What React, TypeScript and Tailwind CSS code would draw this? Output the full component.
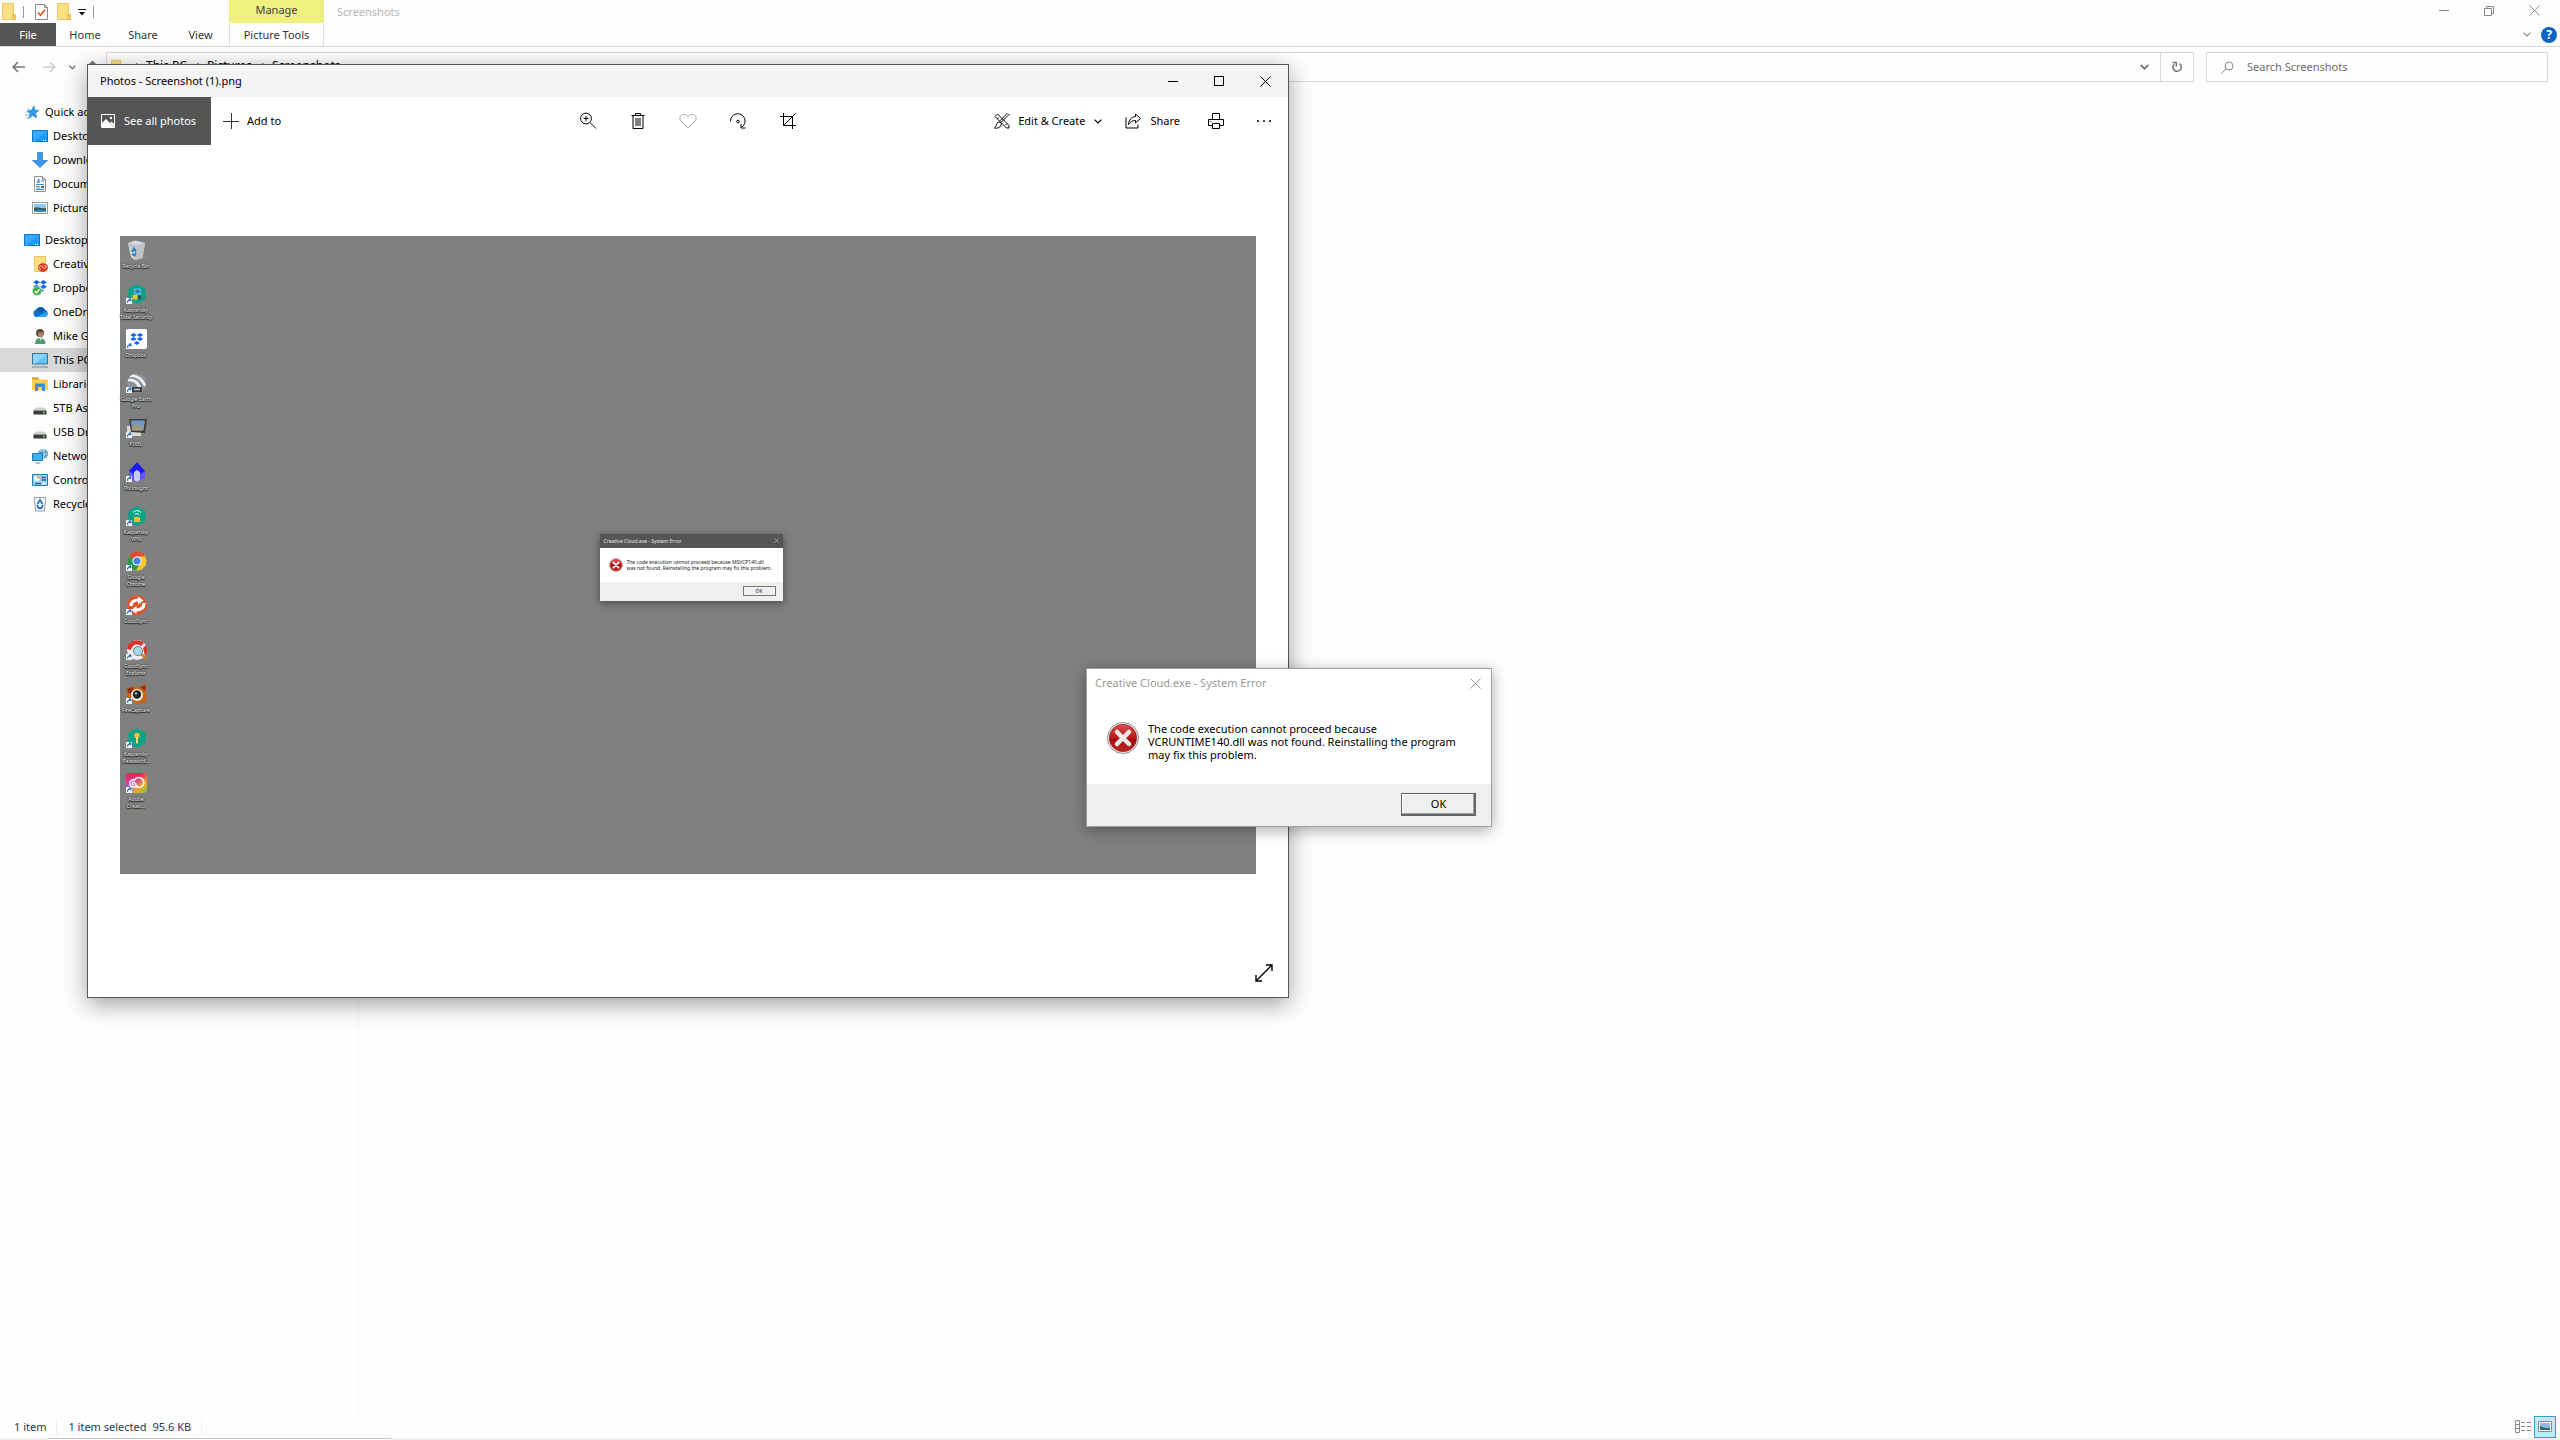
import React from "react";
import type { ReactNode } from "react";

type IconProps = { className?: string };

function FolderIcon({ className = "h-[17px] w-[14px]" }: IconProps) {
  return (
    <svg viewBox="0 0 14 17" className={className} aria-hidden="true">
      <path d="M.5.5h11v11l1.5 1v4H.5z" fill="#fbdf85" stroke="#edc65c" />
      <path d="M10.5 11.5h3v5h-3z" fill="#f3c957" stroke="#e2b442" strokeWidth=".7" />
    </svg>
  );
}

function CheckDocIcon() {
  return (
    <svg viewBox="0 0 13 16" className="h-4 w-[13px]" aria-hidden="true">
      <path d="M.5.5h9l3 3v12H.5z" fill="#fff" stroke="#8c8c8c" />
      <path d="M9.5.5v3h3" fill="none" stroke="#8c8c8c" />
      <path d="M3 8.5l2.5 2.8L10 5.8" fill="none" stroke="#e2571e" strokeWidth="1.7" />
    </svg>
  );
}

function Chevron({ className = "h-[5px] w-[8px]", width = 1.5 }: IconProps & { width?: number }) {
  return (
    <svg viewBox="0 0 8 5" className={className} fill="none" stroke="currentColor" strokeWidth={width} aria-hidden="true">
      <path d="M.6.6L4 4 7.4.6" />
    </svg>
  );
}

function Arrow({ className }: IconProps) {
  return (
    <svg viewBox="0 0 13 12" className={className} fill="none" stroke="currentColor" strokeWidth="1.7" aria-hidden="true">
      <path d="M6 1L1.2 6 6 11M1.2 6H13" />
    </svg>
  );
}

function CloseGlyph({ className = "size-[11px]" }: IconProps) {
  return (
    <svg viewBox="0 0 11 11" className={className} fill="none" stroke="currentColor" aria-hidden="true">
      <path d="M.5.5l10 10M10.5.5l-10 10" />
    </svg>
  );
}

const side = {
  star: (
    <svg viewBox="0 0 16 16" className="size-4">
      <path d="M3 5h3M1.500 8h4M1 11h4M2 14h3" stroke="#7fc0ee" />
      <path d="M10 2l1 4.200 4 .2-3.400 2.500 1 4.900-4-2.400-3.700 3 1.100-4.800L3.300 6.800l3.800-.3z" fill="#2d9de8" stroke="#1c7fc8" strokeWidth=".6" />
    </svg>
  ),
  desktop: (
    <svg viewBox="0 0 16 16" className="size-4">
      <path d="M.5 2.5h15v11H.5z" fill="#1a9bfa" stroke="#0d74c4" />
      <path d="M1 3h14L5 11H1z" fill="#38abff" />
      <path d="M2 12.5h1M11 12.5h1M13 12.5h1" stroke="#fff" />
    </svg>
  ),
  download: (
    <svg viewBox="0 0 16 16" className="size-4">
      <path d="M5.500.5h5v8h5L8 15.600.5 8.500h5z" fill="#3c97e4" stroke="#2b7cc7" strokeWidth=".7" />
    </svg>
  ),
  document: (
    <svg viewBox="0 0 16 16" className="size-4">
      <path d="M2.500.5h8l3 3v12h-11z" fill="#fff" stroke="#8f8f8f" />
      <path d="M10.500.5v3h3" fill="none" stroke="#8f8f8f" />
      <path d="M7 3l-2 4M7 3v4M9 5h3M4 8.500h8M4 13.500h8" stroke="#2f8fd3" strokeWidth="1.1" />
      <path d="M4 10.500h4M4 12h4" stroke="#63788a" strokeWidth=".8" />
      <path d="M9 10h3v2H9z" fill="#3b5f78" />
    </svg>
  ),
  pictures: (
    <svg viewBox="0 0 16 16" className="size-4">
      <path d="M.5 2.500h15v11H.5z" fill="#fff" stroke="#979797" />
      <path d="M2 4h12v8H2z" fill="#8fc6ee" />
      <path d="M2 8c3-2 6 1 12 0v4H2z" fill="#2f5f63" />
      <path d="M2 10.500c4-1 8-1 12 .2V12H2z" fill="#3f87b5" />
    </svg>
  ),
  creative: (
    <svg viewBox="0 0 16 16" className="size-4">
      <path d="M2.500.5h11v15h-11z" fill="#fbdf85" stroke="#edc65c" />
      <ellipse cx="11" cy="11.500" rx="5" ry="4.200" fill="#dc2f17" />
      <path d="M9 13.300a1.700 1.700 0 1 1 1.500-2.600l1 1.500a1.600 1.600 0 1 0 .2-2.600" fill="none" stroke="#fff" strokeWidth=".8" />
    </svg>
  ),
  dropbox: (
    <svg viewBox="0 0 16 16" className="size-4">
      <path d="M4.500 0L8 2.200 4.500 4.500 1 2.200zM11.500 0L15 2.200l-3.500 2.300L8 2.200zM4.500 4.500L8 6.700 4.500 9 1 6.700zM11.500 4.500L15 6.700 11.500 9 8 6.700zM8 8l4 2.500L8 13z" fill="#1668e8" />
      <circle cx="5" cy="11" r="4.600" fill="#3fae49" stroke="#e4f3e4" strokeWidth=".6" />
      <path d="M2.800 11l1.700 1.900 3-3.700" fill="none" stroke="#fff" strokeWidth="1.400" />
    </svg>
  ),
  onedrive: (
    <svg viewBox="0 0 16 16" className="size-4">
      <path d="M4 13a4 4 0 0 1 0-7.500A5 5 0 0 1 13 6a3.600 3.600 0 0 1 0 7z" fill="#1173cf" />
      <path d="M5 13l9-5a3 3 0 0 1-1 5z" fill="#29a4ee" />
      <path d="M4.500 5.300A5 5 0 0 1 13 6l-4 3z" fill="#0b5aaf" />
    </svg>
  ),
  user: (
    <svg viewBox="0 0 16 16" className="size-4">
      <path d="M3 16c0-4 2-6 5-6s5.500 2 5.500 6z" fill="#4f9a78" />
      <path d="M7 9h3l-1 4z" fill="#f1f1ec" />
      <circle cx="8" cy="5" r="4" fill="#5d4a3e" />
      <path d="M6 4.500c2 .5 3-.5 5.500 0 0 3-.8 5-2.700 5S6 7 6 4.500z" fill="#b28562" />
    </svg>
  ),
  pc: (
    <svg viewBox="0 0 16 16" className="size-4">
      <path d="M.5 1.500h15v10.500H.5z" fill="#62c4fb" stroke="#3e6e8f" />
      <path d="M1 2h14L3 11.500H1z" fill="#8ad6ff" />
      <path d="M0 15h16" stroke="#6b8799" />
    </svg>
  ),
  libraries: (
    <svg viewBox="0 0 16 16" className="size-4">
      <path d="M0 1.500h6l1.500 2H16V14H0z" fill="#fdce52" />
      <path d="M0 1.500h6l1 2H0z" fill="#e09a22" />
      <path d="M3 7.500h10V15h-3v-4H6v4H3z" fill="#3f8fd0" />
    </svg>
  ),
  drive: (
    <svg viewBox="0 0 16 16" className="size-4">
      <path d="M3 7.500h10l1.500 3h-13z" fill="#d2d2d2" />
      <path d="M1.500 10.500h13v4h-13z" fill="#3a3a3a" />
      <path d="M11 12.500h2" stroke="#5be05b" strokeWidth="1.300" />
    </svg>
  ),
  network: (
    <svg viewBox="0 0 16 16" className="size-4">
      <circle cx="11" cy="6" r="5" fill="#5b9fc6" />
      <path d="M8 3c2 0 3-1 5-1M9 8c2-2 4-2 6-2M11 1c1.500 3 1.500 6 0 10" stroke="#bfe1ee" fill="none" />
      <path d="M.5 5.500h10v7H.5z" fill="#3fb2f4" stroke="#2878ae" />
      <path d="M3.500 15h5" stroke="#5688a8" />
    </svg>
  ),
  control: (
    <svg viewBox="0 0 16 16" className="size-4">
      <path d="M.5 2.500h15v11H.5z" fill="#9dd5f2" stroke="#1b7db4" />
      <circle cx="5" cy="6.500" r="2.700" fill="#fff" />
      <path d="M5 6.500V3.800a2.700 2.700 0 0 1 2.700 2.700z" fill="#e2a12c" />
      <path d="M9.500 5.500h4.500M9.500 8h4.500M3 11.500h6" stroke="#1668a0" strokeWidth="1.300" />
      <path d="M10.500 10.500h3v2h-3z" fill="#fff" />
    </svg>
  ),
  recycle: (
    <svg viewBox="0 0 16 16" className="size-4">
      <path d="M2 1.500h12L12.500 15h-9z" fill="#eef1f3" stroke="#9ba3a8" />
      <path d="M5.500 8L8 4l2.500 4M11 9l-1.500 3H6.500L5 9" fill="none" stroke="#2b7ccc" strokeWidth="1.800" />
    </svg>
  ),
};

const quickItems = [
  { label: "Desktop", icon: side.desktop },
  { label: "Downloads", icon: side.download },
  { label: "Documents", icon: side.document },
  { label: "Pictures", icon: side.pictures },
];

const treeItems = [
  { label: "Creative", icon: side.creative },
  { label: "Dropbox", icon: side.dropbox },
  { label: "OneDrive", icon: side.onedrive },
  { label: "Mike G", icon: side.user },
  { label: "This PC", icon: side.pc, selected: true },
  { label: "Libraries", icon: side.libraries },
  { label: "5TB As", icon: side.drive },
  { label: "USB Drive", icon: side.drive },
  { label: "Network", icon: side.network },
  { label: "Control Panel", icon: side.control },
  { label: "Recycle Bin", icon: side.recycle },
];

function SideRow({ label, icon, root, selected }: { label: string; icon: ReactNode; root?: boolean; selected?: boolean }) {
  return (
    <li>
      <button
        type="button"
        className={`flex h-6 w-full items-center gap-[5px] text-left text-black ${root ? "pl-6" : "pl-8"} ${selected ? "bg-[#d9d9d9]" : ""}`}
      >
        {icon}
        <span className="whitespace-nowrap">{label}</span>
      </button>
    </li>
  );
}

function TitleBar() {
  return (
    <header className="flex h-[23px] items-stretch">
      <div className="flex w-[229px] items-center pl-[2px]">
        <FolderIcon />
        <span className="ml-[7px] h-3 w-px bg-[#9a9a9a]" />
        <button type="button" aria-label="Properties" className="ml-[11px]"><CheckDocIcon /></button>
        <button type="button" aria-label="New folder" className="ml-[9px]"><FolderIcon /></button>
        <button type="button" aria-label="Customize Quick Access Toolbar" className="ml-[7px]">
          <svg viewBox="0 0 8 8" className="size-2"><path d="M0 1.500h8" stroke="#111" /><path d="M1 4h6L4 7.500z" fill="#111" /></svg>
        </button>
        <span className="ml-[7px] h-3 w-px bg-[#9a9a9a]" />
      </div>
      <div className="flex w-[95px] items-center justify-center bg-[#eff17f] pb-1 text-[#444]">Manage</div>
      <h1 className="flex flex-1 items-center pl-[13px] text-[#b4b4b4]">Screenshots</h1>
      <div className="flex items-center pr-[3px] pb-[2px] text-[#8a8a8a]">
        <button type="button" aria-label="Minimize" className="flex w-[45px] justify-center"><span className="h-px w-[10px] bg-[#8a8a8a]" /></button>
        <button type="button" aria-label="Restore" className="flex w-[45px] justify-center">
          <svg viewBox="0 0 10 10" className="size-[10px]" fill="none" stroke="currentColor"><path d="M.5 2.500h7v7h-7zM2.500 2.500v-2h7v7h-2" /></svg>
        </button>
        <button type="button" aria-label="Close" className="flex w-[46px] justify-center"><CloseGlyph /></button>
      </div>
    </header>
  );
}

function RibbonTabs() {
  return (
    <nav className="flex h-6 items-stretch border-b border-[#dadada] text-[#333]" aria-label="Ribbon">
      <button type="button" className="w-14 bg-[#555] text-white">File</button>
      <button type="button" className="w-[58px]">Home</button>
      <button type="button" className="w-[58px]">Share</button>
      <button type="button" className="w-[57px]">View</button>
      <button type="button" className="w-[95px] border-x border-[#dedede]">Picture Tools</button>
      <div className="ml-auto flex items-center gap-[10px] pr-[3px] text-[#8a8a8a]">
        <button type="button" aria-label="Expand the Ribbon"><Chevron width={1.2} /></button>
        <button type="button" aria-label="Help" className="flex size-4 items-center justify-center rounded-full bg-[#0b66c3] text-[12px] font-bold text-white">?</button>
      </div>
    </nav>
  );
}

function AddressRow() {
  const crumbs = ["This PC", "Pictures", "Screenshots"];
  return (
    <div className="flex h-10 items-center pr-3 pl-3 text-[#777]">
      <div className="flex w-[94px] items-center">
        <button type="button" aria-label="Back"><Arrow className="h-3 w-[13px]" /></button>
        <button type="button" aria-label="Forward" className="ml-[18px] text-[#cfcfcf]"><Arrow className="h-3 w-[13px] rotate-180" /></button>
        <button type="button" aria-label="Recent locations" className="ml-[13px]"><Chevron className="h-[5px] w-[7px]" /></button>
        <button type="button" aria-label="Up" className="ml-[10px]"><Arrow className="h-3 w-[13px] rotate-90" /></button>
      </div>
      <div className="flex h-[30px] flex-1 items-stretch border border-[#d9d9d9]">
        <div className="flex flex-1 items-center pl-1 text-[12px] text-black">
          <FolderIcon className="h-4 w-3" />
          <ol className="flex items-center pb-[2px] pl-[11px]">
            {crumbs.map((c) => (
              <li key={c} className="flex items-center">
                <Chevron className="h-[5px] w-2 -rotate-90 text-[#888]" />
                <button type="button" className="pr-2 pl-1 whitespace-nowrap">{c}</button>
              </li>
            ))}
          </ol>
        </div>
        <button type="button" aria-label="Previous locations" className="flex w-[31px] items-center justify-center"><Chevron className="h-[6px] w-[9px]" width={1.7} /></button>
        <button type="button" aria-label="Refresh" className="flex w-[33px] items-center justify-center border-l border-[#d9d9d9]">
          <svg viewBox="0 0 12 12" className="size-3" fill="none" stroke="currentColor" strokeWidth="1.600"><path d="M8.500 2.600a4.200 4.200 0 1 1-5.400.6" /><path d="M1.500 1.500h3.800v4" /></svg>
        </button>
      </div>
      <label className="ml-3 flex h-[30px] w-[342px] items-center border border-[#d9d9d9] pl-[14px]">
        <svg viewBox="0 0 13 13" className="size-[13px]" fill="none" stroke="#8a8a8a" aria-hidden="true"><circle cx="8" cy="5" r="4" /><path d="M5 8L.5 12.500" /></svg>
        <input type="search" aria-label="Search Screenshots" placeholder="Search Screenshots" className="ml-[13px] flex-1 bg-transparent outline-none placeholder:text-[#6d6d6d]" />
      </label>
    </div>
  );
}

function StatusBar() {
  return (
    <footer className="flex h-[25px] flex-col text-[#1e395b]">
      <div className="flex h-[23px] items-center pr-1 pl-[14px]">
        <span className="border-r border-[#f0f0f0] pr-[10px]">1 item</span>
        <span className="pl-[11px]">1 item selected</span>
        <span className="border-r border-[#f0f0f0] pr-[10px] pl-[6px]">95.6 KB</span>
        <button type="button" aria-label="Details view" className="ml-auto">
          <svg viewBox="0 0 16 13" className="h-[13px] w-4" fill="none" stroke="#888"><path d="M.5.5h4v12h-4zM.5 4.500h4M.5 8.500h4M6 2.500h4M12 2.500h4M6 6.500h4M12 6.500h4M6 10.500h4M12 10.500h4" /></svg>
        </button>
        <button type="button" aria-label="Large icons view" className="ml-[3px] flex h-[22px] w-[22px] items-center justify-center border border-[#3a9dc8] bg-[#c5e6f6]">
          <svg viewBox="0 0 14 11" className="h-[11px] w-[14px]"><path d="M.5.500h13v10H.5z" fill="#fff" stroke="#888" /><path d="M2 2h10v7H2z" fill="#8db8ea" /><path d="M2 5c4 2 6 2 10 2v2H2z" fill="#2f6a68" /></svg>
        </button>
      </div>
      <div className="flex h-[2px] bg-[#efefef]"><div className="ml-12 w-[343px] border-t border-[#c4c4c4] bg-white" /></div>
    </footer>
  );
}

function ShortcutBadge() {
  return (
    <g>
      <path d="M0 14h6v6H0z" fill="#eef4fb" />
      <path d="M1.500 18.800c0-2 1-2.800 2.600-2.800M2.800 15h2v2.300" fill="none" stroke="#225ba5" strokeWidth="1.100" />
    </g>
  );
}

const hexagon = "M11 0l8.700 5v10L11 20l-8.700-5V5z";

const shortcuts: { name: string[]; art: ReactNode; plain?: boolean }[] = [
  {
    name: ["Recycle Bin"],
    plain: true,
    art: (
      <>
        <path d="M2 3l7-2.500L19 3l-2.500 15L9 20l-4-3z" fill="#d7dadc" />
        <path d="M2 3l8 2 9-2-3 15-6.500 2z" fill="#bfc3c6" />
        <path d="M6 12l2-3.500 2 3M10 13l-1.500 2.500L6 14" fill="none" stroke="#1a7fd4" strokeWidth="1.800" />
      </>
    ),
  },
  {
    name: ["Kaspersky", "Total Security"],
    art: (
      <>
        <path d={hexagon} fill="#0fa287" />
        <path d="M8 4.500h7v6.500H8z" fill="#4cb9e8" />
        <path d="M9.500 6h4v3h-4z" fill="#2a7ba4" />
        <path d="M6.500 11h5v4.500h-5z" fill="#f2c233" />
        <path d="M12 11.500h3v4h-3z" fill="#34495a" />
      </>
    ),
  },
  {
    name: ["Dropbox"],
    art: (
      <>
        <rect width="21" height="20" rx="2" fill="#fff" />
        <path d="M7.500 4l3.300 2-3.300 2-3.300-2zM14 4l3.300 2L14 8l-3.200-2zM7.500 8l3.300 2-3.300 2-3.300-2zM14 8l3.300 2-3.300 2-3.200-2zM10.800 12l3 2-3 2-3-2z" fill="#1266e8" />
      </>
    ),
  },
  {
    name: ["Google Earth", "Pro"],
    art: (
      <>
        <circle cx="11" cy="10" r="9.500" fill="#8b93a0" />
        <path d="M3 4.500c6-2 12 2 15 9l2-1c-2-7-8-11-14-11zM1.500 8.500c6-1 9 2 11 7l3-.500c-2-7-8-10-13-9z" fill="#f0f2f4" />
        <path d="M6 14h10v5H6z" fill="#3d3d3d" />
        <path d="M8 16.500h6" stroke="#c7c7c7" strokeWidth="1.500" />
      </>
    ),
  },
  {
    name: ["PIXEL"],
    art: (
      <>
        <path d="M1 8h14v10H1z" fill="#dedad0" />
        <path d="M3 1h18l-2 14-14-1z" fill="#3e3a34" />
        <path d="M5 2.500h14l-1.500 10H6z" fill="#6c9bd0" />
        <path d="M6 8l5-2 6 3-.3 3.500H6z" fill="#a3987a" />
      </>
    ),
  },
  {
    name: ["PixInsight"],
    art: (
      <>
        <path d="M11 0l8 9v6l-8 5-8-5V9z" fill="#1c1cf0" />
        <path d="M3 9l5 3v6l-5-3z" fill="#5a5aff" />
        <path d="M19 9l-5 3v6l5-3z" fill="#5a5aff" />
        <path d="M8 10l3-2 3 2v8l-3 2-3-2z" fill="#c9c9ff" />
      </>
    ),
  },
  {
    name: ["Kaspersky", "VPN"],
    art: (
      <>
        <path d={hexagon} fill="#0fa287" />
        <path d="M7 6.500c2.500-2.500 5.500-2.500 8 0M8.500 8.800c1.500-1.500 3.500-1.500 5 0" fill="none" stroke="#e5fff8" />
        <path d="M8 11h6v5H8z" fill="#f2c233" />
      </>
    ),
  },
  {
    name: ["Google", "Chrome"],
    art: (
      <>
        <circle cx="11" cy="10" r="9.500" fill="#f6c933" />
        <path d="M11 10L2.800 5.200A9.500 9.500 0 0 1 19.300 5.500H11z" fill="#dd4a3c" />
        <path d="M11 10L2.800 5.200A9.500 9.500 0 0 0 10 19.500l4-7z" fill="#279b55" />
        <circle cx="11" cy="10" r="4.600" fill="#fff" />
        <circle cx="11" cy="10" r="3.600" fill="#4681ea" />
      </>
    ),
  },
  {
    name: ["GoodSync"],
    art: (
      <>
        <circle cx="11" cy="10" r="10" fill="#dc5330" />
        <path d="M5 11c0-5 4-6 8-6" fill="none" stroke="#fff" strokeWidth="3.200" />
        <path d="M12 1.500L17.500 5.500 12 9.500z" fill="#fff" />
        <path d="M18 8c0 5-3 7-8 7" fill="none" stroke="#fff" strokeWidth="3.200" />
        <path d="M10.500 11v8L5.500 15z" fill="#fff" />
      </>
    ),
  },
  {
    name: ["GoodSync", "Explorer"],
    art: (
      <>
        <circle cx="11" cy="10" r="10" fill="#eee" />
        <path d="M1 9C2 0 12-2 18 3l-3 3C10 3 6 5 5 10zM17 8l3-3c2 4 1 9-1 11z" fill="#d6332a" />
        <path d="M15 14l6 5" stroke="#c2802f" strokeWidth="2.400" />
        <circle cx="12" cy="11" r="4.500" fill="#a9d5ea" stroke="#6a7d86" />
      </>
    ),
  },
  {
    name: ["FireCapture"],
    art: (
      <>
        <path d="M0 6l6-4 6 1 8-3v9l1 9-10 2-9-4z" fill="#c8641b" />
        <path d="M1 5l5-2 2 4-5 3zM14 3l6-2-1 6z" fill="#912f10" />
        <circle cx="11" cy="11" r="6" fill="#f1efe9" />
        <circle cx="11" cy="10.500" r="4.200" fill="#232323" />
        <circle cx="10" cy="9.500" r="1.200" fill="#b0c2cc" />
      </>
    ),
  },
  {
    name: ["Kaspersky", "Password..."],
    art: (
      <>
        <path d={hexagon} fill="#0fa287" />
        <circle cx="11" cy="7.500" r="2.700" fill="#f2c233" />
        <path d="M11 9v6.500" stroke="#f6e07b" strokeWidth="1.800" />
      </>
    ),
  },
  {
    name: ["Adobe", "Creati..."],
    art: (
      <>
        <defs>
          <linearGradient id="cc-base" x1="0" y1="0" x2="0" y2="1">
            <stop offset="0" stopColor="#e9263c" />
            <stop offset=".5" stopColor="#d936b8" />
            <stop offset="1" stopColor="#3fa9f5" />
          </linearGradient>
          <linearGradient id="cc-side" x1="0" y1="0" x2="1" y2="1">
            <stop offset=".4" stopColor="#f7931e" stopOpacity="0" />
            <stop offset=".7" stopColor="#f6a721" />
            <stop offset="1" stopColor="#7ac943" />
          </linearGradient>
        </defs>
        <rect width="21" height="20" rx="4" fill="url(#cc-base)" />
        <rect width="21" height="20" rx="4" fill="url(#cc-side)" />
        <path d="M13 14H7.500a3.600 3.600 0 1 1 1-7 5 5 0 1 1 5 7.500c-2 0-2.500-1.500-4.500-3.500M10 11l-1.500-1.500c-2-1.500-3.500 2-1 2.500" fill="none" stroke="#fff" strokeWidth="1.600" />
      </>
    ),
  },
];

function DesktopShortcuts() {
  return (
    <ul className="flex h-[581px] w-8 flex-col pt-1">
      {shortcuts.map((s) => (
        <li key={s.name.join(" ")} className="flex flex-1 flex-col items-center">
          <svg viewBox="0 0 21 20" className="h-5 w-[21px] shrink-0" aria-hidden="true">
            {s.art}
            {!s.plain && <ShortcutBadge />}
          </svg>
          <span className="mt-[3px] text-center text-[5px] leading-[7px] font-medium whitespace-nowrap text-[#e4e4e4] [text-shadow:0_0_2px_#000,0_1px_1px_#000]">
            {s.name.map((line) => (
              <span key={line} className="block">{line}</span>
            ))}
          </span>
        </li>
      ))}
    </ul>
  );
}

function ErrorIcon({ className, id }: { className: string; id: string }) {
  return (
    <svg viewBox="0 0 32 32" className={className} aria-hidden="true">
      <defs>
        <linearGradient id={id} x1="0" y1="0" x2="0" y2="1">
          <stop offset="0" stopColor="#d9504f" />
          <stop offset=".48" stopColor="#bd1c1c" />
          <stop offset=".55" stopColor="#a30a0a" />
          <stop offset="1" stopColor="#c92a2a" />
        </linearGradient>
      </defs>
      <circle cx="16" cy="16" r="15.500" fill="#f4f4f4" stroke="#8d8d8d" />
      <circle cx="16" cy="16" r="13.700" fill={`url(#${id})`} stroke="#8a1515" strokeWidth=".6" />
      <path d="M10 10l12 12M22 10L10 22" stroke="#ececec" strokeWidth="4.500" strokeLinecap="round" />
    </svg>
  );
}

function MiniErrorDialog() {
  return (
    <div className="w-[183px] bg-white text-[5px] leading-[6px] text-[#222] shadow-[0_2px_8px_rgba(0,0,0,0.45)]">
      <div className="flex h-[14px] items-center justify-between bg-[#555] px-1 text-[#e6e6e6]">
        <span>Creative Cloud.exe - System Error</span>
        <CloseGlyph className="size-[5px]" />
      </div>
      <div className="flex h-[34px] items-center gap-1 pl-[9px]">
        <ErrorIcon className="size-[14px]" id="err-small" />
        <p className="whitespace-nowrap">
          The code execution cannot proceed because MSVCP140.dll
          <br />
          was not found. Reinstalling the program may fix this problem.
        </p>
      </div>
      <div className="flex h-[19px] items-center justify-end bg-[#efefef] pr-[7px]">
        <span className="flex h-[10px] w-[33px] items-center justify-center border border-[#777]">OK</span>
      </div>
    </div>
  );
}

function ToolButton({ label, children, className = "w-[50px]" }: { label: string; children: ReactNode; className?: string }) {
  return (
    <button type="button" aria-label={label} className={`flex items-center justify-center ${className}`}>
      <svg viewBox="0 0 18 18" className="size-[18px]" fill="none" stroke="currentColor">
        {children}
      </svg>
    </button>
  );
}

function PhotosWindow() {
  return (
    <section
      aria-label="Photos"
      className="absolute top-[64px] left-[87px] flex h-[934px] w-[1202px] flex-col border border-[#555] bg-white text-black shadow-[0_6px_22px_rgba(0,0,0,0.38)]"
    >
      <div className="flex h-8 items-center bg-[#f4f4f4] pl-3">
        <h2>Photos - Screenshot (1).png</h2>
        <div className="ml-auto flex h-full">
          <button type="button" aria-label="Minimize" className="flex w-[46px] items-center justify-center"><span className="h-px w-[10px] bg-black" /></button>
          <button type="button" aria-label="Maximize" className="flex w-[46px] items-center justify-center"><span className="size-[10px] border border-black" /></button>
          <button type="button" aria-label="Close" className="flex w-[46px] items-center justify-center"><CloseGlyph /></button>
        </div>
      </div>

      <div className="flex h-12 items-stretch">
        <div className="flex flex-1">
          <button type="button" className="flex w-[123px] items-center gap-[9px] bg-[#555] pl-[13px] whitespace-nowrap text-white">
            <svg viewBox="0 0 14 14" className="size-[14px]" aria-hidden="true"><path d="M.5.500h13v13H.5z" fill="none" stroke="#fff" /><path d="M1 9l4-4 8 8.500H1zM9 9l1.500-1.500L13 10v3z" fill="#fff" /><circle cx="10" cy="4" r="1.200" fill="#fff" /></svg>
            See all photos
          </button>
          <button type="button" className="flex items-center gap-2 pl-3">
            <svg viewBox="0 0 16 16" className="size-4" stroke="#333" aria-hidden="true"><path d="M8.500 0v16M0 8.500h16" /></svg>
            Add to
          </button>
        </div>
        <div className="flex">
          <ToolButton label="Zoom"><circle cx="7" cy="6.500" r="5.400" /><path d="M11 10.500l6 6M4.500 6.500h5M7 4v5" /></ToolButton>
          <ToolButton label="Delete"><path d="M2.500 3.500h13M6.500 3.500v-2h5v2M4 3.500v13h10v-13M7 6v8M9 6v8M11 6v8" /></ToolButton>
          <button type="button" aria-label="Favorite" className="flex w-[50px] items-center justify-center text-[#a6a6a6]">
            <svg viewBox="0 0 18 18" className="size-[18px]" fill="none" stroke="currentColor"><path d="M9 16L2.200 9.200C.2 7.200.8 4.500 2.600 3.200 4.600 1.800 7.500 2.300 9 5c1.500-2.700 4.400-3.200 6.400-1.800 1.800 1.300 2.400 4 .4 6z" /></svg>
          </button>
          <ToolButton label="Rotate"><path d="M1.500 9.500a7.300 7.300 0 1 1 11 5.800M12 12v4h4.500" /><circle cx="9" cy="9.500" r="1.300" /></ToolButton>
          <ToolButton label="Crop"><path d="M4.500 1v12.500H17M1 4.500h12.500V17M4.500 13.500L16.500 1.500" /></ToolButton>
        </div>
        <div className="flex flex-1 justify-end">
          <button type="button" className="flex items-center gap-[7px] whitespace-nowrap">
            <svg viewBox="0 0 18 18" className="size-[18px]" fill="none" stroke="currentColor" aria-hidden="true"><path d="M2 4.500L4.500 2 16 13.500V16h-2.500zM4 7l1.500-1.500M12.500 13l1.500-1.500M16.500 2L8 10.500M14.500 1L7 8.800M7.500 10.500c-2-1-3.500 0-4 2S2.500 15.500 1.500 16c3 .8 6.500-.5 6.800-4.500z" /></svg>
            Edit &amp; Create
            <Chevron className="ml-[2px] h-[5px] w-2" width={1.2} />
          </button>
          <button type="button" className="ml-[22px] flex items-center gap-2">
            <svg viewBox="0 0 18 18" className="size-[18px]" fill="none" stroke="currentColor" aria-hidden="true"><path d="M2 5.500V16h12v-3.500M11.500 2l5 4.500-5 4.500V8.500C8 8.500 6 10 4.500 12.500 4.800 8 7.500 5 11.500 4.500z" /></svg>
            Share
          </button>
          <ToolButton label="Print" className="ml-[12px] w-12"><path d="M5.500 7.500v-6h7v6M5.500 13.500h-4v-6h15v6h-4M5.500 11.500h7v5h-7zM3.500 9.500h1" /></ToolButton>
          <button type="button" aria-label="See more" className="flex w-12 items-center justify-center">
            <svg viewBox="0 0 16 4" className="h-1 w-4"><circle cx="2" cy="2" r="1" /><circle cx="8" cy="2" r="1" /><circle cx="14" cy="2" r="1" /></svg>
          </button>
        </div>
      </div>

      <div className="flex flex-1 px-8 pt-[91px] pb-[74px]">
        <div className="flex flex-1 bg-[#808080]">
          <DesktopShortcuts />
          <div className="flex flex-1 items-center justify-center pt-6 pr-[26px]">
            <MiniErrorDialog />
          </div>
        </div>
      </div>
      <div className="flex h-[49px] items-center justify-end pr-[15px]">
        <button type="button" aria-label="Full screen">
          <svg viewBox="0 0 18 18" className="size-[18px]" fill="none" stroke="currentColor" strokeWidth="1.400"><path d="M1 17L17 1M11 1h6v6M1 11v6h6" /></svg>
        </button>
      </div>
    </section>
  );
}

function ErrorDialog() {
  return (
    <section
      role="dialog"
      aria-label="Creative Cloud.exe - System Error"
      className="absolute top-[668px] left-[1086px] flex w-[406px] flex-col border border-[#a0a0a0] bg-white text-black shadow-[0_3px_14px_rgba(0,0,0,0.35)]"
    >
      <div className="flex h-[30px] items-center justify-between pr-[10px] pb-[2px] pl-2 text-[#999]">
        <h2>Creative Cloud.exe - System Error</h2>
        <button type="button" aria-label="Close"><CloseGlyph /></button>
      </div>
      <div className="flex h-[85px] gap-[9px] pt-[23px] pl-5">
        <ErrorIcon className="size-8" id="err-main" />
        <p className="leading-[13px] whitespace-nowrap">
          The code execution cannot proceed because
          <br />
          VCRUNTIME140.dll was not found. Reinstalling the program
          <br />
          may fix this problem.
        </p>
      </div>
      <div className="flex h-[42px] items-center justify-end bg-[#efefef] pr-[15px] pb-[2px]">
        <button type="button" className="flex h-[23px] w-[75px] items-center justify-center border border-[#666] shadow-[inset_-1px_-1px_0_#666,inset_-2px_-2px_0_#a0a0a0,inset_1px_1px_0_#fff]">OK</button>
      </div>
    </section>
  );
}

export default function App() {
  return (
    <div className="relative flex h-screen w-full flex-col overflow-hidden bg-[#fefefe] font-['Noto_Sans','Open_Sans',sans-serif] text-[11px] leading-4">
      <TitleBar />
      <RibbonTabs />
      <AddressRow />
      <main className="flex flex-1">
        <nav aria-label="Folders" className="w-[359px] border-r border-[#f6f6f6] pt-[13px]">
          <ul>
            <SideRow root label="Quick access" icon={side.star} />
            {quickItems.map((i) => <SideRow key={i.label} {...i} />)}
          </ul>
          <ul className="mt-2">
            <SideRow root label="Desktop" icon={side.desktop} />
            {treeItems.map((i) => <SideRow key={i.label} {...i} />)}
          </ul>
        </nav>
      </main>
      <StatusBar />
      <PhotosWindow />
      <ErrorDialog />
    </div>
  );
}
